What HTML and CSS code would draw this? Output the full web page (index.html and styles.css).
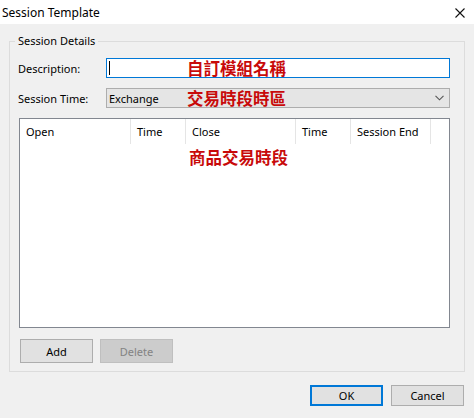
FILE: index.html
```html
<!DOCTYPE html>
<html>
<head>
<meta charset="utf-8">
<link rel="stylesheet" href="styles.css">
</head>
<body>
<div class="dialog">
  <div class="titlebar">
    <span class="title">Session Template</span>
    <svg class="close" width="10" height="10" viewBox="0 0 10 10"><path d="M0.5 0.5 L9.5 9.5 M9.5 0.5 L0.5 9.5" stroke="#111" stroke-width="1.1" fill="none"/></svg>
  </div>
  <div class="content">
    <fieldset class="group">
      <legend class="legend">Session Details</legend>
      <div class="group-inner">
        <div class="form">
          <label class="label">Description:</label>
          <div class="textbox">
            <span class="caret"></span>
            <span class="note note-input">自訂模組名稱</span>
          </div>
          <label class="label">Session Time:</label>
          <div class="combo">
            <span class="combo-text">Exchange</span>
            <span class="note note-combo">交易時段時區</span>
            <svg class="chevron" width="9" height="6" viewBox="0 0 9 6"><path d="M0.5 0.8 L4.5 4.8 L8.5 0.8" stroke="#555" stroke-width="1.1" fill="none"/></svg>
          </div>
        </div>
        <div class="list">
          <div class="list-head">
            <div class="col c1">Open</div>
            <div class="col c2">Time</div>
            <div class="col c3">Close</div>
            <div class="col c4">Time</div>
            <div class="col c5">Session End</div>
            <div class="col c6"></div>
          </div>
          <div class="list-body">
            <span class="note note-list">商品交易時段</span>
          </div>
        </div>
        <div class="list-buttons">
          <button class="btn">Add</button>
          <button class="btn btn-disabled">Delete</button>
        </div>
      </div>
    </fieldset>
    <div class="dialog-buttons">
      <button class="btn btn-dlg btn-default">OK</button>
      <button class="btn btn-dlg">Cancel</button>
    </div>
  </div>
</div>
</body>
</html>
```

FILE: styles.css
```css
html, body {
  margin: 0;
  padding: 0;
}
body {
  width: 474px;
  height: 418px;
  background: #f0f0f0;
  font-family: "Noto Sans", "Liberation Sans", sans-serif;
  font-size: 11px;
  color: #000;
  overflow: hidden;
}
.dialog {
  display: flex;
  flex-direction: column;
  height: 418px;
}
.titlebar {
  height: 24px;
  background: #fff;
  display: flex;
  align-items: center;
  justify-content: space-between;
  padding: 0 9px 0 2px;
  box-sizing: border-box;
}
.title {
  font-size: 12px;
  color: #000;
}
.close {
  margin-top: 1px;
}
.content {
  flex: 1;
  padding: 10px 9px 0 9px;
  display: flex;
  flex-direction: column;
}
.group {
  margin: 0;
  padding: 0;
  border: 1px solid #dcdcdc;
  min-inline-size: 0;
}
.legend {
  margin-left: 5px;
  padding: 0 3px;
  line-height: 14px;
  font-size: 11px;
}
.group-inner {
  padding: 10px 14px 8px 8px;
}
.form {
  display: grid;
  grid-template-columns: 88px 1fr;
  row-gap: 10px;
  align-items: center;
}
.label {
  font-size: 11px;
}
.textbox {
  height: 20px;
  box-sizing: border-box;
  border: 1px solid #0078d7;
  background: #fff;
  display: flex;
  align-items: center;
  padding-left: 2px;
}
.caret {
  width: 1px;
  height: 14px;
  background: #000;
}
.note {
  font-family: "Noto Sans CJK TC", sans-serif;
  font-weight: 700;
  font-size: 16.5px;
  color: #c80a0a;
  line-height: 18px;
}
.note-input {
  margin-left: 77px;
}
.combo {
  height: 20px;
  box-sizing: border-box;
  border: 1px solid #adadad;
  background: #e5e5e5;
  display: flex;
  align-items: center;
  padding-left: 2px;
  padding-right: 5px;
}
.combo-text {
  width: 78px;
}
.chevron {
  margin-left: auto;
}
.list {
  margin: 10px 0 0 1px;
  height: 210px;
  box-sizing: border-box;
  border: 1px solid #828790;
  background: #fff;
  display: flex;
  flex-direction: column;
}
.list-head {
  display: flex;
  height: 25px;
}
.col {
  box-sizing: border-box;
  padding-left: 6px;
  border-right: 1px solid #e5e5e5;
  display: flex;
  align-items: center;
  font-size: 11px;
}
.c1 { width: 111px; }
.c2 { width: 55px; }
.c3 { width: 110px; }
.c4 { width: 55px; }
.c5 { width: 80px; }
.c6 { flex: 1; border-right: none; }
.list-body {
  flex: 1;
  text-align: center;
  padding: 4px 0 0 8px;
}
.list-buttons {
  display: flex;
  gap: 7px;
  margin-top: 11px;
  padding-left: 2px;
}
.btn {
  font-family: "Noto Sans", "Liberation Sans", sans-serif;
  font-size: 11px;
  width: 73px;
  height: 24px;
  margin: 0;
  padding: 0;
  box-sizing: border-box;
  border: 1px solid #adadad;
  background: #e1e1e1;
  color: #000;
}
.btn-disabled {
  background: #cccccc;
  border-color: #bfbfbf;
  color: #838383;
}
.dialog-buttons {
  display: flex;
  justify-content: flex-end;
  gap: 8px;
  margin-top: 13px;
  padding-right: 1px;
}
.btn-dlg {
  height: 21px;
}
.btn-default {
  border: 2px solid #0078d7;
}
```
